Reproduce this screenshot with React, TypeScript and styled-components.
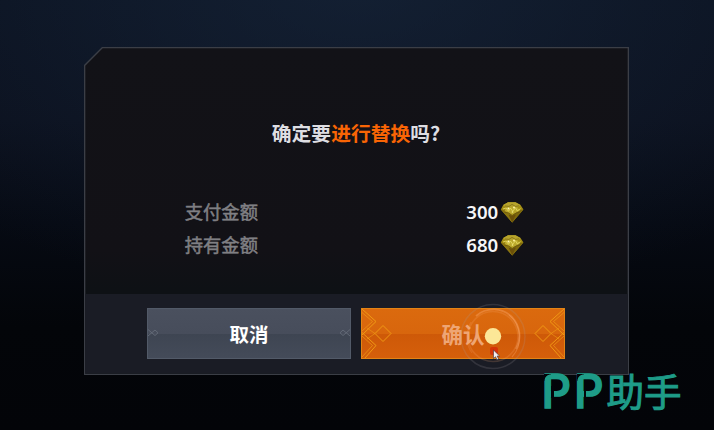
import React from "react";
import styled, { createGlobalStyle } from "styled-components";

const GlobalStyle = createGlobalStyle`
  *, *::before, *::after { box-sizing: border-box; }
  html, body { margin: 0; background: #020307; overflow: hidden; }
  button { font: inherit; }
`;

const Screen = styled.main`
  position: relative;
  width: 714px;
  height: 430px;
  overflow: hidden;
  padding: 47px 85px 0 84px;
  font-family: "Noto Sans", "Noto Sans CJK SC", sans-serif;
  background:
    radial-gradient(ellipse 560px 330px at 50% -20px, rgba(26, 43, 66, 0.55), rgba(12, 20, 38, 0) 100%),
    linear-gradient(180deg, #0b1220 0%, #0b101d 28%, #060a13 52%, #030509 76%, #030408 100%);
`;

const Frame = styled.section`
  width: 545px;
  height: 328px;
  padding: 1.3px;
  background: #3b3e46;
  clip-path: polygon(18px 0, 100% 0, 100% 100%, 0 100%, 0 18px);
`;

const Panel = styled.div`
  display: flex;
  flex-direction: column;
  height: 100%;
  background: linear-gradient(180deg, #121217 0%, #121116 62%, #0e1115 74%);
  clip-path: polygon(17.4px 0, 100% 0, 100% 100%, 0 100%, 0 17.4px);
`;

const Content = styled.div`
  flex: 1;
  display: flex;
  flex-direction: column;
`;

const Title = styled.h1`
  margin: 70px 0 0 186.5px;
  font-size: 19.8px;
  line-height: 30px;
  font-weight: 700;
  font-family: "Noto Sans CJK SC", sans-serif;
  color: #dedee2;
  white-space: nowrap;
`;

const Accent = styled.span`
  color: #f96505;
`;

const Amounts = styled.dl`
  display: grid;
  grid-auto-rows: 33px;
  margin: 47px 103.5px 0 99.5px;
`;

const AmountRow = styled.div`
  display: flex;
  align-items: center;
  justify-content: space-between;
`;

const Label = styled.dt`
  font: 400 18.3px/33px "Noto Sans CJK SC", sans-serif;
  -webkit-text-stroke: 0.5px #7f7f83;
  color: #7f7f83;
`;

const Value = styled.dd`
  display: flex;
  align-items: center;
  gap: 2px;
  margin: 0;
  font: 600 18.6px/33px "Noto Sans", sans-serif;
  color: #f6f6f8;
`;

const GemIcon = styled.svg`
  width: 24px;
  height: 22px;
`;

const Footer = styled.footer`
  display: flex;
  gap: 10px;
  height: 80px;
  padding: 14.5px 62px 0 61.7px;
  background: #1a1c25;
`;

const ActionButton = styled.button<{ $primary?: boolean }>`
  position: relative;
  display: flex;
  align-items: center;
  justify-content: center;
  width: 204px;
  height: 51px;
  padding: 0;
  border: 1px solid ${(p) => (p.$primary ? "#e38314" : "#525a68")};
  background: ${(p) =>
    p.$primary
      ? "linear-gradient(180deg, #db6a0e 0%, #d8660d 50%, #ce5908 51%, #d55f0b 100%)"
      : "linear-gradient(180deg, #4a505e 0%, #474d5b 50%, #3e4552 51%, #444b59 100%)"};
`;

const ButtonText = styled.span<{ $faded?: boolean }>`
  font-family: "Noto Sans CJK SC", sans-serif;
  font-weight: 700;
  font-size: ${(p) => (p.$faded ? "21.5px" : "19.5px")};
  line-height: 1.4;
  color: ${(p) => (p.$faded ? "#eea574" : "#ffffff")};
`;

const Ornament = styled.svg`
  position: absolute;
  inset: -1px;
  width: 204px;
  height: 51px;
`;

const TouchRipple = styled.svg`
  position: absolute;
  left: 455px;
  top: 298px;
  width: 76px;
  height: 76px;
  pointer-events: none;
`;

const Watermark = styled.div`
  position: absolute;
  left: 541.5px;
  top: 364px;
  display: flex;
  align-items: center;
  height: 54px;
  color: #1e9c88;
`;

const WatermarkLetter = styled.span`
  position: relative;
  width: 32.5px;
  font: 500 46px/54px Inter, sans-serif;
  -webkit-text-stroke: 1.5px #1e9c88;

  &::before {
    content: "";
    position: absolute;
    left: 2.5px;
    top: 10px;
    width: 7px;
    height: 7px;
    background: radial-gradient(circle at 100% 100%, transparent 6.2px, #03050a 7px);
  }

  &::after {
    content: "";
    position: absolute;
    left: 9.5px;
    top: 22px;
    width: 2.8px;
    height: 12px;
    background: #03050a;
  }
`;

const WatermarkName = styled.span`
  position: relative;
  top: -1px;
  font: 400 37.5px/54px "Noto Sans CJK SC", sans-serif;
  -webkit-text-stroke: 1px #1e9c88;
`;

function Gem() {
  return (
    <GemIcon viewBox="0 0 24 22">
      <path d="M.8 8.4 3.2 4 8 1.200h7.500l5 2.800L23.400 8.400 12.200 21.500z" fill="#a48f14" />
      <path d="M3.200 4 8 1.200h7.500l5 2.800-3.500 3H7z" fill="#b7a42c" />
      <path d="M.8 8.400 6.500 9l5.700 5.500v7z" fill="#8a7410" />
      <path d="M23.400 8.400 17 9l-4.800 5.500v7z" fill="#7d680b" />
      <path d="M6 6.500h11.400l2.600 3-7.800 4.200L4.600 10z" fill="#bba92c" />
      <path d="m8.500 13.500 3.700 1.200 3.800-1.300-3.800 8.100z" fill="#6b5009" />
      <path d="m3 8 3-1 2.500 3.300 2-3.200 2.200 3.200 2.800-3.600 1.700 3.200 3.300-2.200" fill="none" stroke="#e6da62" strokeWidth="1" opacity=".85" />
      <path d="m5 5 4 .4 3-2 3.500 2 3.500-.6" fill="none" stroke="#857216" strokeWidth=".9" />
      <path d="m4.500 11.300 4 .6 3.700 2.600 4.300-2.600 3.200-.7" fill="none" stroke="#6a560f" strokeWidth=".8" />
      <circle cx="8.500" cy="7.500" r="1" fill="#fff8b3" />
      <circle cx="14" cy="6.500" r="1" fill="#fff3a0" />
      <circle cx="12.500" cy="11" r=".8" fill="#f6eb8a" />
    </GemIcon>
  );
}

function PrimaryEdge() {
  return (
    <g fill="none" stroke="#f09a14" strokeWidth="1">
      <path d="M1 1 15 13.500 1 27" />
      <path d="M1 4.500 11.500 13.500 1 23" opacity=".7" />
      <path d="M1 24.500 15 37.500 4 50" />
      <path d="M1 28 11.500 37.500 1 49" opacity=".7" />
      <path d="M14 25.500 22 17.500 30 25.500 22 33.500z" />
      <path d="M6 20 14 25.500 6 31" opacity=".6" />
    </g>
  );
}

function SecondaryEdge() {
  return (
    <path d="m1 21.500 7 6 3-2.700-3-2.800-7 6" fill="none" stroke="#626976" strokeWidth="1" />
  );
}

function EdgeOrnaments({ primary = false }: { primary?: boolean }) {
  const edge = primary ? <PrimaryEdge /> : <SecondaryEdge />;
  return (
    <Ornament viewBox="0 0 204 51">
      {edge}
      <g transform="translate(204 0) scale(-1 1)">{edge}</g>
    </Ornament>
  );
}

const amounts = [
  { label: "支付金额", value: 300 },
  { label: "持有金额", value: 680 },
];

export default function App() {
  return (
    <>
      <GlobalStyle />
      <Screen>
        <Frame role="dialog">
          <Panel>
            <Content>
              <Title>
                确定要<Accent>进行替换</Accent>吗?
              </Title>
              <Amounts>
                {amounts.map((a) => (
                  <AmountRow key={a.label}>
                    <Label>{a.label}</Label>
                    <Value>
                      {a.value}
                      <Gem />
                    </Value>
                  </AmountRow>
                ))}
              </Amounts>
            </Content>
            <Footer>
              <ActionButton>
                <EdgeOrnaments />
                <ButtonText>取消</ButtonText>
              </ActionButton>
              <ActionButton $primary>
                <EdgeOrnaments primary />
                <ButtonText $faded>确认</ButtonText>
              </ActionButton>
            </Footer>
          </Panel>
        </Frame>
        <TouchRipple viewBox="0 0 76 76">
          <g fill="none" stroke="#ffb27a">
            <circle cx="38" cy="38.5" r="25" strokeWidth="1.6" opacity=".18" />
            <path d="M21 18a26.500 26.500 0 0 1 36 1 27 27 0 0 1 4 32" strokeWidth="1.8" opacity=".35" />
            <path d="M54 17a29 29 0 0 1 3 42" strokeWidth="1.2" opacity=".3" />
            <circle cx="38" cy="38.500" r="32" stroke="#a7a3a6" strokeWidth="1.5" opacity=".18" />
            <path d="M16 24a28 28 0 0 0 1 31" strokeWidth="1.2" opacity=".18" />
          </g>
          <circle cx="38" cy="38.300" r="8.200" fill="#fce797" />
          <rect x="35" y="49" width="8" height="8" rx="2" fill="#d62b07" opacity=".85" />
          <path d="M38.500 52v8.500l2-1.800 1.500 3 1.600-.8-1.500-2.900h2.500z" fill="#f3edf0" stroke="#42323a" strokeWidth=".6" />
        </TouchRipple>
        <Watermark>
          <WatermarkLetter>P</WatermarkLetter>
          <WatermarkLetter>P</WatermarkLetter>
          <WatermarkName>助手</WatermarkName>
        </Watermark>
      </Screen>
    </>
  );
}
